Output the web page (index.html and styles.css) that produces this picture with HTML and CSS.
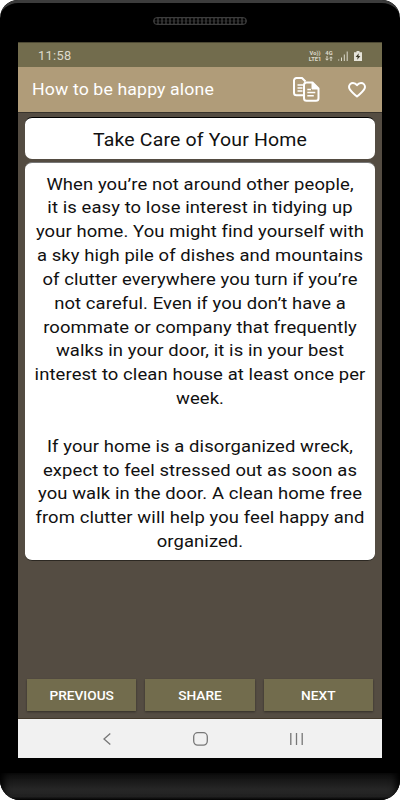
FILE: index.html
```html
<!DOCTYPE html>
<html lang="en">
<head>
    <meta charset="UTF-8">
    <meta name="viewport" content="width=device-width, initial-scale=1.0">
    <title>How to be happy alone</title>
    <link rel="stylesheet" href="styles.css">
</head>
<body>

    <div class="phone">
        <div class="phone-top">
            <div class="speaker"></div>
        </div>

        <div class="screen">
            <div class="status-bar">
                <span class="clock">11:58</span>
                <div class="status-icons">
                    <div class="network"><span>Vo))</span><span>LTE1</span></div>
                    <div class="network data"><span>4G</span>
                        <svg width="8" height="5" viewBox="0 0 8 5"><path d="M2 0v4M.5 2.700 2 4.200l1.500-1.500M6 5V1M4.500 2.300 6 .8l1.500 1.500"/></svg>
                    </div>
                    <svg class="signal" width="10" height="10" viewBox="0 0 10 10">
                        <path class="weak" d="M.7 8v2"/>
                        <path d="M3.500 6.500V10M6.300 3.500V10M9.200.5V10"/>
                    </svg>
                    <svg class="battery" width="8" height="10" viewBox="0 0 8 10">
                        <path d="M2.500 0h3v1.200H8V10H0V1.200h2.500z"/>
                        <path class="bolt" d="M4.800 2.300 1.600 6h2L3.200 8.700 6.400 5h-2z"/>
                    </svg>
                </div>
            </div>

            <div class="app-bar">
                <h1>How to be happy alone</h1>
                <svg class="copy" width="27" height="25" viewBox="0 0 27 25">
                    <path d="M10 18.200H3.500a2.500 2.500 0 0 1-2.500-2.500V3.500A2.500 2.500 0 0 1 3.500 1H9l3.500 3.500"/>
                    <path class="rows" d="M4.500 8H10M4.500 11H9.500M4.500 14H9.500"/>
                    <path d="M13.500 5.500h6l6 6v9.700a2.500 2.500 0 0 1-2.500 2.500h-9.500a2.500 2.500 0 0 1-2.500-2.500V8a2.500 2.500 0 0 1 2.500-2.500z"/>
                    <path class="fold" d="M19 5.500v6.500h6.500z"/>
                    <path class="rows" d="M14.300 12.500H18M14.300 15.500h8M14.300 18.700h6.500"/>
                </svg>
                <svg class="heart" width="18" height="16" viewBox="0 0 18 16">
                    <path d="M9 14.500C4.500 10.600 1 8.300 1 5.100 1 2.700 2.800 1 5 1c1.600 0 3 .8 4 2.200C10 1.800 11.400 1 13 1c2.200 0 4 1.700 4 4.100 0 3.200-3.500 5.500-8 9.400z"/>
                </svg>
            </div>

            <div class="content">
                <div class="card title">
                    <h2>Take Care of Your Home</h2>
                </div>
                <div class="card article">
                    <p>When you’re not around other people,<br>
                    it is easy to lose interest in tidying up<br>
                    your home. You might find yourself with<br>
                    a sky high pile of dishes and mountains<br>
                    of clutter everywhere you turn if you’re<br>
                    not careful. Even if you don’t have a<br>
                    roommate or company that frequently<br>
                    walks in your door, it is in your best<br>
                    interest to clean house at least once per<br>
                    week.</p>
                    <p>If your home is a disorganized wreck,<br>
                    expect to feel stressed out as soon as<br>
                    you walk in the door. A clean home free<br>
                    from clutter will help you feel happy and<br>
                    organized.</p>
                </div>
                <div class="buttons">
                    <button>PREVIOUS</button>
                    <button>SHARE</button>
                    <button>NEXT</button>
                </div>
            </div>

            <div class="nav-bar">
                <svg width="8" height="12" viewBox="0 0 8 12"><path d="M7.300.5 1 6l6.300 5.500"/></svg>
                <svg width="15" height="14" viewBox="0 0 15 14"><rect x=".7" y=".7" width="13.600" height="12.400" rx="4"/></svg>
                <svg width="13" height="12" viewBox="0 0 13 12"><path d="M.8 0v12M6.500 0v12M12.200 0v12"/></svg>
            </div>
        </div>

        <div class="phone-bottom"></div>
    </div>

</body>
</html>
```
FILE: styles.css
```css
* {
    box-sizing: border-box;
}

body {
    margin: 0;
    background: #fff;
    font-family: Roboto, "Liberation Sans", sans-serif;
}

svg {
    display: block;
    fill: none;
    flex-shrink: 0;
}

/* Phone frame */
.phone {
    width: 400px;
    height: 800px;
    display: flex;
    flex-direction: column;
    background: #000;
    border-radius: 18px 18px 20px 20px;
    overflow: hidden;
}

.phone-top {
    height: 42px;
    padding-top: 14px;
    border-top: 3px solid #3c3c3c;
    border-radius: 18px 18px 0 0;
    flex-shrink: 0;
}

.speaker {
    width: 94px;
    height: 8px;
    margin: 0 auto;
    border: 1px solid #3c3c3c;
    border-radius: 4px;
    background: radial-gradient(circle, #000 35%, #303030 65%) 0 0 / 4px 3px;
}

.phone-bottom {
    height: 27px;
    margin-top: 15px;
    background: linear-gradient(#0d0d0d, #262626 60%, #222 88%, #050505);
    box-shadow: inset 7px 0 7px -3px #000, inset -7px 0 7px -3px #000;
}

/* Screen */
.screen {
    width: 364px;
    height: 716px;
    margin: 0 auto;
    display: flex;
    flex-direction: column;
    flex-shrink: 0;
}

.status-bar {
    height: 25px;
    padding: 1px 20px 0 20px;
    display: flex;
    align-items: center;
    justify-content: space-between;
    background: #726c4d;
    border-top: 1px solid #4c4833;
    color: #dddacc;
}

.clock {
    font-size: 12.8px;
    letter-spacing: 0.3px;
}

.status-icons {
    display: flex;
    align-items: center;
}

.network {
    width: 14px;
    display: flex;
    flex-direction: column;
    align-items: center;
    font-size: 5.8px;
    font-weight: 700;
    line-height: 6px;
}

.network.data {
    width: 8px;
    margin: 0 5px 0 3px;
}

.network path {
    stroke: #dddacc;
}

.signal path {
    stroke: #dddacc;
}

.signal .weak {
    stroke: #b0ac98;
}

.battery {
    margin-left: 6px;
}

.battery path {
    fill: #e6e4da;
}

.battery .bolt {
    fill: #3c3928;
}

.app-bar {
    height: 45px;
    padding: 0 16px 0 14px;
    display: flex;
    align-items: center;
    background: #b09c79;
    color: #fff;
}

.app-bar h1 {
    margin: 0;
    flex: 1;
    font-size: 16.7px;
    font-weight: 400;
    letter-spacing: 0.12px;
    transform: scaleX(1.06);
    transform-origin: left;
}

.app-bar path {
    stroke: #fff;
    stroke-width: 2;
    stroke-linejoin: round;
}

.app-bar .copy .rows {
    stroke-width: 1.5;
}

.app-bar .copy .fold {
    fill: #fff;
    stroke-width: 1;
}

.heart {
    margin-left: 28px;
}

/* Article */
.content {
    flex: 1;
    padding: 4px 7px 7px;
    display: flex;
    flex-direction: column;
    background: #544c42;
    border-top: 1px solid #38332c;
    border-bottom: 1px solid #41372a;
}

.card {
    background: #fff;
    border-radius: 7px;
    border-top: 1px solid #000;
    color: #111;
    text-align: center;
}

/* Slightly widened text */
.card h2,
.card p {
    transform: scaleX(1.06);
}

.title {
    height: 42px;
}

.title h2 {
    margin: 0;
    font-size: 18.4px;
    font-weight: 400;
    line-height: 43px;
    letter-spacing: 0.15px;
}

.article {
    height: 399px;
    margin-top: 3px;
    padding-top: 9.6px;
    border-top-color: #777;
    border-bottom: 1px solid #2c2822;
    font-size: 17.4px;
    line-height: 23.83px;
    letter-spacing: 0.09px;
    white-space: nowrap;
}

.article p {
    margin: 0 0 23.83px;
}

.buttons {
    margin-top: auto;
    padding: 0 2px;
    display: flex;
    gap: 9px;
}

.buttons button {
    flex: 1;
    height: 32px;
    padding: 0;
    border: none;
    background: #726c4d;
    color: #fff;
    font-family: inherit;
    font-size: 13.7px;
    font-weight: 500;
    box-shadow: 0 1px 2px rgba(0, 0, 0, 0.4);
}

/* System navigation */
.nav-bar {
    height: 39px;
    padding: 0 79px 0 85px;
    display: flex;
    align-items: center;
    justify-content: space-between;
    background: #f1f1f1;
}

.nav-bar svg {
    stroke: #777;
    stroke-width: 1.3;
}
```
